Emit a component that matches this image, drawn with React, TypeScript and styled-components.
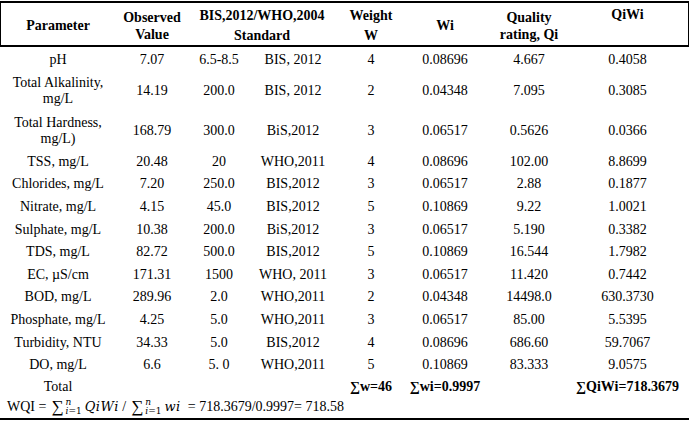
import styled, { createGlobalStyle } from "styled-components";

const GlobalStyle = createGlobalStyle`
  html, body {
    margin: 0;
    padding: 0;
    background: #fff;
  }
  body {
    font-family: "Liberation Serif", "Times New Roman", serif;
    color: #000;
  }
`;

const Table = styled.div`
  width: 689px;
  margin-top: 1px;
  font-size: 14px;
`;

const Row = styled.div<{ $pad?: number }>`
  display: grid;
  grid-template-columns: 116px 72px 62px 86px 70px 78px 90px 107px;
  padding-right: 8px;
  & > div {
    padding: ${(p) => p.$pad ?? 3.3}px 0;
  }
`;

const Head = styled(Row)`
  border-top: 2px solid #000;
  border-bottom: 2px solid #000;
  box-shadow: inset 1px 0 #000, inset -1px 0 #000;
  height: 42px;
  box-sizing: content-box;
  & > div {
    padding: 3px 0;
  }
`;

const Body = styled.div`
  padding-top: 2px;
  border-bottom: 2px solid #000;
`;

const Cell = styled.div<{ $top?: boolean; $span?: number }>`
  display: flex;
  flex-direction: column;
  justify-content: ${(p) => (p.$top ? "flex-start" : "center")};
  align-items: center;
  text-align: center;
  white-space: nowrap;
  line-height: 16px;
  ${(p) => (p.$span ? `grid-column: span ${p.$span};` : "")}
`;

const HeadCell = styled(Cell)<{ $lh?: number }>`
  font-weight: bold;
  line-height: ${(p) => p.$lh ?? 18}px;
`;

const Sum = styled(Cell)`
  font-weight: bold;
`;

const TotalRow = styled(Row)`
  & > div {
    padding: 2px 0;
  }
`;

const FormulaRow = styled.div`
  display: flex;
  align-items: center;
  height: 21.4px;
  padding-left: 7px;
  white-space: nowrap;
  line-height: 16px;
`;

const Sigma = styled.span`
  display: inline-flex;
  align-items: center;
  margin: 0 3px 0 5px;
  font-size: 17px;
  line-height: 16px;
`;

const Limits = styled.span`
  display: inline-flex;
  flex-direction: column;
  font-size: 9px;
  line-height: 9px;
  margin-left: 2px;
  font-family: "DejaVu Serif", serif;
`;

const MathVar = styled.span`
  font-style: italic;
  font-family: "DejaVu Serif", "Liberation Serif", serif;
  font-size: 13px;
  letter-spacing: 0.5px;
`;

type Item = {
  name: string[];
  obs: string;
  lim: string;
  std: string;
  w: string;
  wi: string;
  qi: string;
  qiwi: string;
};

const rows: Item[] = [
  { name: ["pH"], obs: "7.07", lim: "6.5-8.5", std: "BIS, 2012", w: "4", wi: "0.08696", qi: "4.667", qiwi: "0.4058" },
  { name: ["Total Alkalinity,", "mg/L"], obs: "14.19", lim: "200.0", std: "BIS, 2012", w: "2", wi: "0.04348", qi: "7.095", qiwi: "0.3085" },
  { name: ["Total Hardness,", "mg/L)"], obs: "168.79", lim: "300.0", std: "BiS,2012", w: "3", wi: "0.06517", qi: "0.5626", qiwi: "0.0366" },
  { name: ["TSS, mg/L"], obs: "20.48", lim: "20", std: "WHO,2011", w: "4", wi: "0.08696", qi: "102.00", qiwi: "8.8699" },
  { name: ["Chlorides, mg/L"], obs: "7.20", lim: "250.0", std: "BIS,2012", w: "3", wi: "0.06517", qi: "2.88", qiwi: "0.1877" },
  { name: ["Nitrate, mg/L"], obs: "4.15", lim: "45.0", std: "BIS,2012", w: "5", wi: "0.10869", qi: "9.22", qiwi: "1.0021" },
  { name: ["Sulphate, mg/L"], obs: "10.38", lim: "200.0", std: "BiS,2012", w: "3", wi: "0.06517", qi: "5.190", qiwi: "0.3382" },
  { name: ["TDS, mg/L"], obs: "82.72", lim: "500.0", std: "BIS,2012", w: "5", wi: "0.10869", qi: "16.544", qiwi: "1.7982" },
  { name: ["EC, µS/cm"], obs: "171.31", lim: "1500", std: "WHO, 2011", w: "3", wi: "0.06517", qi: "11.420", qiwi: "0.7442" },
  { name: ["BOD, mg/L"], obs: "289.96", lim: "2.0", std: "WHO,2011", w: "2", wi: "0.04348", qi: "14498.0", qiwi: "630.3730" },
  { name: ["Phosphate, mg/L"], obs: "4.25", lim: "5.0", std: "WHO,2011", w: "3", wi: "0.06517", qi: "85.00", qiwi: "5.5395" },
  { name: ["Turbidity, NTU"], obs: "34.33", lim: "5.0", std: "BIS,2012", w: "4", wi: "0.08696", qi: "686.60", qiwi: "59.7067" },
  { name: ["DO, mg/L"], obs: "6.6", lim: "5. 0", std: "WHO,2011", w: "5", wi: "0.10869", qi: "83.333", qiwi: "9.0575" },
];

function SumSign() {
  return (
    <Sigma>
      ∑
      <Limits>
        <span>
          <i>n</i>
        </span>
        <span>
          <i>i</i>=1
        </span>
      </Limits>
    </Sigma>
  );
}

export default function App() {
  return (
    <>
      <GlobalStyle />
      <Table>
        <Head>
          <HeadCell>Parameter</HeadCell>
          <HeadCell $lh={17}>
            <span>Observed</span>
            <span>Value</span>
          </HeadCell>
          <HeadCell $span={2} $lh={20}>
            <span>BIS,2012/WHO,2004</span>
            <span>Standard</span>
          </HeadCell>
          <HeadCell $lh={20}>
            <span>Weight</span>
            <span>W</span>
          </HeadCell>
          <HeadCell>Wi</HeadCell>
          <HeadCell $lh={17}>
            <span>Quality</span>
            <span>rating, Qi</span>
          </HeadCell>
          <HeadCell $top>QiWi</HeadCell>
        </Head>
        <Body>
          {rows.map((r) => (
            <Row key={r.name.join(" ")} $pad={r.name.length > 1 ? 3.75 : 3.3}>
              <Cell>
                {r.name.map((n) => (
                  <span key={n}>{n}</span>
                ))}
              </Cell>
              <Cell>{r.obs}</Cell>
              <Cell>{r.lim}</Cell>
              <Cell>{r.std}</Cell>
              <Cell>{r.w}</Cell>
              <Cell>{r.wi}</Cell>
              <Cell>{r.qi}</Cell>
              <Cell>{r.qiwi}</Cell>
            </Row>
          ))}
          <TotalRow>
            <Cell>Total</Cell>
            <Cell />
            <Cell />
            <Cell />
            <Sum>∑w=46</Sum>
            <Sum>∑wi=0.9997</Sum>
            <Cell />
            <Sum>∑QiWi=718.3679</Sum>
          </TotalRow>
          <FormulaRow>
            WQI =
            <SumSign />
            <MathVar>QiWi</MathVar>
            &nbsp;/
            <SumSign />
            <MathVar>wi</MathVar>
            &nbsp; = 718.3679/0.9997= 718.58
          </FormulaRow>
        </Body>
      </Table>
    </>
  );
}
